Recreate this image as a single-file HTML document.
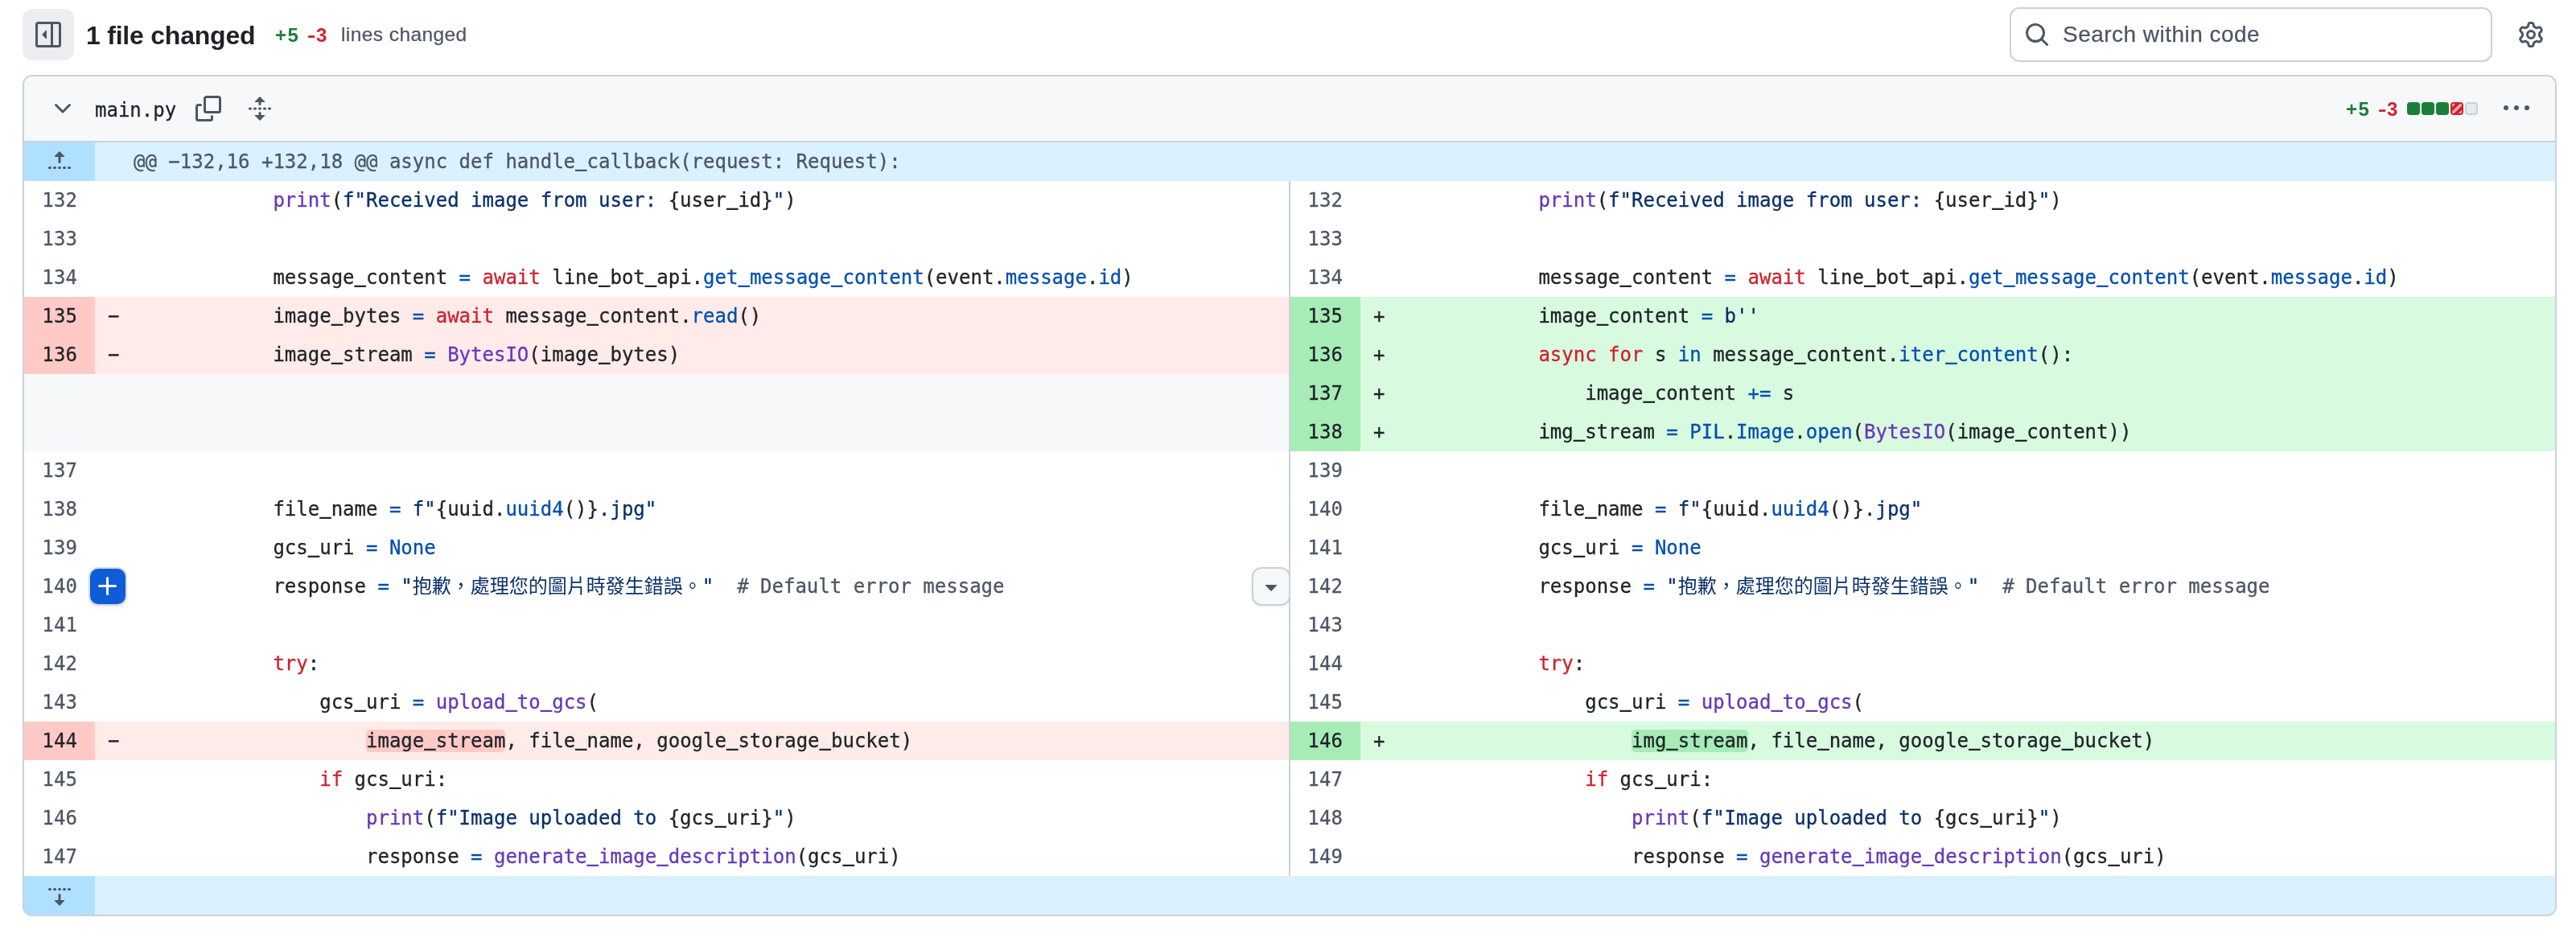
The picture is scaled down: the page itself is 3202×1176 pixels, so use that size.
<!DOCTYPE html>
<html lang="en">
<head>
<meta charset="utf-8">
<title>1 file changed</title>
<style>
*{box-sizing:border-box}
html,body{margin:0;padding:0}
html{background:#fff}
body{width:3202px;height:1176px;background:#fff;position:relative;overflow:hidden;color:#1f2328;font-family:"Liberation Sans",sans-serif;-webkit-font-smoothing:antialiased;will-change:transform}
svg{display:block}
.ic path,.ic circle{fill:#4d5664}

/* ---------- top toolbar ---------- */
.tgl{position:absolute;left:28px;top:11px;width:64px;height:64px;border-radius:12px;background:#ebedf0}
.tgl svg{position:absolute;left:16px;top:16px}
.ttl{position:absolute;left:107px;top:20px;height:48px;line-height:48px;font-size:32px;font-weight:700;white-space:nowrap;color:#1f2328;letter-spacing:-.22px}
.st{position:absolute;top:26px;height:36px;line-height:36px;font-size:24px;white-space:nowrap}
.st.add{left:342px;color:#1a7f37;font-weight:700;letter-spacing:1.6px}
.st.del{left:382px;color:#d1242f;font-weight:700;letter-spacing:3px}
.st.lc{left:424px;color:#4d5664;font-size:24.5px;letter-spacing:.42px;top:25px;-webkit-text-stroke:.25px}
.srch{position:absolute;left:2498px;top:9px;width:600px;height:68px;border:2px solid #c8d2dc;border-radius:12px;background:#fff}
.srch svg{position:absolute;left:16px;top:16px}
.srch span{position:absolute;left:64px;top:12px;height:40px;line-height:40px;font-size:28px;letter-spacing:.47px;-webkit-text-stroke:.25px;color:#4d5664;white-space:nowrap}
.gear{position:absolute;left:3130px;top:27px}

/* ---------- file box ---------- */
.file{position:absolute;left:28px;top:93px;width:3150px;height:1046px;border:2px solid #c8d2dc;border-radius:12px;overflow:hidden;background:#fff}
.fh{position:relative;height:82px;background:#f6f8fa;border-bottom:2px solid #c8d2dc}
.fh .chev{position:absolute;left:32px;top:24px}
.fh .name{-webkit-text-stroke:.3px;position:absolute;left:88px;top:22px;height:40px;line-height:40px;font-family:"DejaVu Sans Mono","Liberation Mono",monospace;font-size:24px;color:#1f2328;white-space:nowrap}
.fh .copy{position:absolute;left:213px;top:24px}
.fh .unf{position:absolute;left:277px;top:24px}
.fh .fadd{position:absolute;left:2886px;top:23px;letter-spacing:1.6px;height:36px;line-height:36px;font-size:24px;font-weight:700;color:#1a7f37}
.fh .fdel{position:absolute;left:2926px;top:23px;letter-spacing:3px;height:36px;line-height:36px;font-size:24px;font-weight:700;color:#d1242f}
.fh .blk{position:absolute;top:32px;width:16px;height:16px;border-radius:4px}
.fh .blk.g{background:#1a7f37}
.fh .blk.r{background:#cf222e;overflow:hidden}
.fh .blk.n{background:#e6eaee;border:2px solid #c8d1db}
.fh .keb{position:absolute;left:3082px;top:24px}

/* ---------- diff ---------- */
.diff{-webkit-text-stroke:.3px;font-family:"DejaVu Sans Mono","Noto Sans CJK TC","Liberation Mono",monospace;font-size:24px;line-height:48px}
.row{position:relative;height:48px;width:3146px}
.num,.code{position:absolute;top:0;height:48px;white-space:pre;overflow:hidden}
.num{text-align:right;color:#4d5664;padding-right:21.8px;letter-spacing:.2px}
.num.l{left:0;width:88px}
.num.r{left:1572px;width:89px;border-left:2px solid #c8d2dc}
.code.l{left:88px;width:1484px}
.code.r{left:1661px;width:1485px}
.code .mk{position:absolute;left:16px;top:0}
.code .ln{position:absolute;left:48px;top:0}
.num.d{background:#ffc9c6;color:#1f2328}
.code.d{background:#ffebe9}
.num.a{background:#a7ecb7;color:#1f2328}
.code.a{background:#d8fadf}
.num.e,.code.e{background:#f6f8fa}
.num.h{background:#afe0ff;width:88px}
.num.h svg{position:absolute;left:28px;top:8px}
.code.h{left:88px;width:3058px;background:#daf1ff;color:#4d5664}
.k{color:#cf222e}
.c{color:#0550ae}
.e{color:#6639ba}
.s{color:#0a3069}
.cj{-webkit-text-stroke:0}
.cm{color:#4d5664}
.code.d .x{background:#ffc9c6;border-radius:5px}
.code.a .x{background:#a7ecb7;border-radius:5px}

/* floating controls on row 140 */
.plus{position:absolute;left:82px;top:612px;width:44px;height:44px;border-radius:10px;background:#0e5dd7;box-shadow:0 0 0 2px #d6dbe0,0 3px 4px rgba(31,35,40,.10)}
.plus svg{position:absolute;left:6px;top:6px}
.plus path{fill:#fff}
.dd{position:absolute;left:1526px;top:610px;width:48px;height:48px;border:2px solid #c8d2dc;border-radius:12px;background:#f6f8fa;box-shadow:0 2px 3px rgba(31,35,40,.06)}
.dd svg{position:absolute;left:6px;top:6px}
u{text-decoration:none;position:relative;top:-3px;text-shadow:0 1px 0 currentColor}
.hy{display:inline-block;transform:scaleX(1.3);transform-origin:0 50%;font-weight:inherit}

</style>
</head>
<body>
<div class="tgl"><svg class="ic" viewBox="0 0 16 16" width="32" height="32"><path d="M4.18 7.82a.25.25 0 0 0 0 .36l2.4 2.39a.25.25 0 0 0 .42-.17V5.6a.25.25 0 0 0-.42-.17Z"/><path d="M1.75 0h12.5C15.216 0 16 .784 16 1.75v12.5A1.75 1.75 0 0 1 14.25 16H1.75A1.75 1.75 0 0 1 0 14.25V1.75C0 .784.784 0 1.75 0ZM1.5 1.75v12.5c0 .138.112.25.25.25H9.5v-13H1.75a.25.25 0 0 0-.25.25ZM11 14.5h3.25a.25.25 0 0 0 .25-.25V1.75a.25.25 0 0 0-.25-.25H11Z"/></svg></div>
<div class="ttl">1 file changed</div>
<div class="st add">+5</div>
<div class="st del"><b class="hy">-</b>3</div>
<div class="st lc">lines changed</div>
<div class="srch"><svg class="ic" viewBox="0 0 16 16" width="32" height="32"><path d="M10.68 11.74a6 6 0 0 1-7.922-8.982 6 6 0 0 1 8.982 7.922l3.04 3.04a.749.749 0 0 1-.326 1.275.749.749 0 0 1-.734-.215ZM11.5 7a4.499 4.499 0 1 0-8.997 0A4.499 4.499 0 0 0 11.5 7Z"/></svg><span>Search within code</span></div>
<svg class="ic gear" viewBox="0 0 16 16" width="32" height="32"><path d="M8 0a8.2 8.2 0 0 1 .701.031C9.444.095 9.99.645 10.16 1.29l.288 1.107c.018.066.079.158.212.224.231.114.454.243.668.386.123.082.233.09.299.071l1.103-.303c.644-.176 1.392.021 1.82.63.27.385.506.792.704 1.218.315.675.111 1.422-.364 1.891l-.814.806c-.049.048-.098.147-.088.294.016.257.016.515 0 .772-.01.147.038.246.088.294l.814.806c.475.469.679 1.216.364 1.891a7.977 7.977 0 0 1-.704 1.217c-.428.61-1.176.807-1.82.63l-1.102-.302c-.067-.019-.177-.011-.3.071a5.909 5.909 0 0 1-.668.386c-.133.066-.194.158-.211.224l-.29 1.106c-.168.646-.715 1.196-1.458 1.260a8.006 8.006 0 0 1-1.402 0c-.743-.064-1.289-.614-1.458-1.260l-.289-1.106c-.018-.066-.079-.158-.212-.224a5.738 5.738 0 0 1-.668-.386c-.123-.082-.233-.09-.299-.071l-1.103.303c-.644.176-1.392-.021-1.820-.63a8.120 8.120 0 0 1-.704-1.218c-.315-.675-.111-1.422.363-1.891l.815-.806c.050-.048.098-.147.088-.294a6.214 6.214 0 0 1 0-.772c.010-.147-.038-.246-.088-.294l-.815-.806C.635 6.045.431 5.298.746 4.623a7.920 7.920 0 0 1 .704-1.217c.428-.61 1.176-.807 1.820-.63l1.102.302c.067.019.177.011.300-.071.214-.143.437-.272.668-.386.133-.066.194-.158.211-.224l.290-1.106C6.009.645 6.556.095 7.299.030 7.530.010 7.764 0 8 0Zm-.571 1.525c-.036.003-.108.036-.137.146l-.289 1.105c-.147.561-.549.967-.998 1.189-.173.086-.340.183-.500.290-.417.278-.970.423-1.529.270l-1.103-.303c-.109-.030-.175.016-.195.045-.220.312-.412.644-.573.990-.014.031-.021.110.059.190l.815.806c.411.406.562.957.530 1.456a4.709 4.709 0 0 0 0 .582c.032.499-.119 1.050-.530 1.456l-.815.806c-.081.080-.073.159-.059.190.162.346.353.677.573.989.020.030.085.076.195.046l1.102-.303c.560-.153 1.113-.008 1.530.270.161.107.328.204.501.290.447.222.850.629.997 1.189l.289 1.105c.029.109.101.143.137.146a6.600 6.600 0 0 0 1.142 0c.036-.003.108-.036.137-.146l.289-1.105c.147-.561.549-.967.998-1.189.173-.086.340-.183.500-.290.417-.278.970-.423 1.529-.270l1.103.303c.109.029.175-.016.195-.045.220-.313.411-.644.573-.990.014-.031.021-.110-.059-.190l-.815-.806c-.411-.406-.562-.957-.530-1.456a4.709 4.709 0 0 0 0-.582c-.032-.499.119-1.050.530-1.456l.815-.806c.081-.080.073-.159.059-.190a6.464 6.464 0 0 0-.573-.989c-.020-.030-.085-.076-.195-.046l-1.102.303c-.560.153-1.113.008-1.530-.270a4.440 4.440 0 0 0-.501-.290c-.447-.222-.850-.629-.997-1.189l-.289-1.105c-.029-.110-.101-.143-.137-.146a6.600 6.600 0 0 0-1.142 0ZM11 8a3 3 0 1 1-6 0 3 3 0 0 1 6 0ZM9.500 8a1.500 1.500 0 1 0-3.001.001A1.500 1.500 0 0 0 9.500 8Z"/></svg>

<div class="file">
<div class="fh">
<svg class="ic chev" viewBox="0 0 16 16" width="32" height="32"><path d="M12.78 5.22a.749.749 0 0 1 0 1.060l-4.250 4.250a.749.749 0 0 1-1.060 0L3.220 6.280a.749.749 0 1 1 1.060-1.060L8 8.939l3.720-3.719a.749.749 0 0 1 1.060 0Z"/></svg>
<span class="name">main.py</span>
<svg class="ic copy" viewBox="0 0 16 16" width="32" height="32"><path d="M0 6.750C0 5.784.784 5 1.750 5h1.500a.75.75 0 0 1 0 1.500h-1.500a.25.25 0 0 0-.250.250v7.500c0 .138.112.250.250.250h7.500a.25.25 0 0 0 .250-.250v-1.500a.75.75 0 0 1 1.500 0v1.500A1.750 1.750 0 0 1 9.250 16h-7.500A1.750 1.750 0 0 1 0 14.250Z"/><path d="M5 1.750C5 .784 5.784 0 6.750 0h7.500C15.216 0 16 .784 16 1.750v7.500A1.750 1.750 0 0 1 14.250 11h-7.500A1.750 1.750 0 0 1 5 9.250Zm1.750-.250a.25.25 0 0 0-.250.250v7.500c0 .138.112.250.250.250h7.500a.25.25 0 0 0 .250-.250v-7.500a.25.25 0 0 0-.250-.250Z"/></svg>
<svg class="ic unf" viewBox="0 0 16 16" width="32" height="32"><path d="m8.177.677 2.896 2.896a.25.25 0 0 1-.177.427H8.750v1.250a.75.75 0 0 1-1.500 0V4H5.104a.25.25 0 0 1-.177-.427L7.823.677a.25.25 0 0 1 .354 0ZM7.250 10.750a.75.75 0 0 1 1.500 0V12h2.146a.25.25 0 0 1 .177.427l-2.896 2.896a.25.25 0 0 1-.354 0l-2.896-2.896A.25.25 0 0 1 5.104 12H7.250v-1.250Zm-5-2a.75.75 0 0 0 0-1.500h-.500a.75.75 0 0 0 0 1.500h.500ZM6 8a.75.75 0 0 1-.750.750h-.500a.75.75 0 0 1 0-1.500h.500A.75.75 0 0 1 6 8Zm2.250.750a.75.75 0 0 0 0-1.500h-.500a.75.75 0 0 0 0 1.500h.500ZM12 8a.75.75 0 0 1-.750.750h-.500a.75.75 0 0 1 0-1.500h.500A.75.75 0 0 1 12 8Zm2.250.750a.75.75 0 0 0 0-1.500h-.500a.75.75 0 0 0 0 1.500h.500Z"/></svg>
<span class="fadd">+5</span><span class="fdel"><b class="hy">-</b>3</span>
<i class="blk g" style="left:2962px"></i><i class="blk g" style="left:2980px"></i><i class="blk g" style="left:2998px"></i>
<i class="blk r" style="left:3016px"><svg viewBox="0 0 16 16" width="16" height="16"><clipPath id="rc"><rect x="2" y="2" width="12" height="12" rx="1.5"/></clipPath><g clip-path="url(#rc)" fill="#f0abb0"><path d="M2 2h4.200L2 6.200ZM2 14l0-2.500L11.500 2h2.500l0 2.500L4.500 14ZM14 14H9.800L14 9.800Z"/></g></svg></i>
<i class="blk n" style="left:3034px"></i>
<svg class="ic keb" viewBox="0 0 16 16" width="32" height="32"><path d="M8 9a1.500 1.500 0 1 0 0-3 1.500 1.500 0 0 0 0 3ZM1.500 9a1.500 1.500 0 1 0 0-3 1.500 1.500 0 0 0 0 3Zm13 0a1.500 1.500 0 1 0 0-3 1.500 1.500 0 0 0 0 3Z"/></svg>
</div>

<div class="diff">
<div class="row hunk"><div class="num l h"><svg class="ic" viewBox="0 0 16 16" width="32" height="32"><path d="M7.823 1.677 4.927 4.573A.25.25 0 0 0 5.104 5H7.25v3.236a.75.75 0 1 0 1.5 0V5h2.146a.25.25 0 0 0 .177-.427L8.177 1.677a.25.25 0 0 0-.354 0ZM13.75 11a.75.75 0 0 0 0 1.5h.5a.75.75 0 0 0 0-1.5h-.5Zm-3.75.75a.75.75 0 0 1 .75-.75h.5a.75.75 0 0 1 0 1.5h-.5a.75.75 0 0 1-.75-.75ZM7.75 11a.75.75 0 0 0 0 1.5h.5a.75.75 0 0 0 0-1.5h-.5ZM4 11.75a.75.75 0 0 1 .75-.75h.5a.75.75 0 0 1 0 1.5h-.5a.75.75 0 0 1-.75-.75ZM1.75 11a.75.75 0 0 0 0 1.5h.5a.75.75 0 0 0 0-1.5h-.5Z"/></svg></div><div class="code h"><span class="ln">@@ −132,16 +132,18 @@ async def handle<u>_</u>callback(request: Request):</span></div></div>
<div class="row"><div class="num l n">132</div><div class="code l n"><span class="ln">            <span class="e">print</span>(<span class="s">f"Received image from user: </span>{user<u>_</u>id}<span class="s">"</span>)</span></div><div class="num r n">132</div><div class="code r n"><span class="ln">            <span class="e">print</span>(<span class="s">f"Received image from user: </span>{user<u>_</u>id}<span class="s">"</span>)</span></div></div>
<div class="row"><div class="num l n">133</div><div class="code l n"><span class="ln"></span></div><div class="num r n">133</div><div class="code r n"><span class="ln"></span></div></div>
<div class="row"><div class="num l n">134</div><div class="code l n"><span class="ln">            message<u>_</u>content <span class="c">=</span> <span class="k">await</span> line<u>_</u>bot<u>_</u>api.<span class="c">get<u>_</u>message<u>_</u>content</span>(event.<span class="c">message</span>.<span class="c">id</span>)</span></div><div class="num r n">134</div><div class="code r n"><span class="ln">            message<u>_</u>content <span class="c">=</span> <span class="k">await</span> line<u>_</u>bot<u>_</u>api.<span class="c">get<u>_</u>message<u>_</u>content</span>(event.<span class="c">message</span>.<span class="c">id</span>)</span></div></div>
<div class="row"><div class="num l d">135</div><div class="code l d"><span class="mk">−</span><span class="ln">            image<u>_</u>bytes <span class="c">=</span> <span class="k">await</span> message<u>_</u>content.<span class="c">read</span>()</span></div><div class="num r a">135</div><div class="code r a"><span class="mk">+</span><span class="ln">            image<u>_</u>content <span class="c">=</span> <span class="s">b''</span></span></div></div>
<div class="row"><div class="num l d">136</div><div class="code l d"><span class="mk">−</span><span class="ln">            image<u>_</u>stream <span class="c">=</span> <span class="e">BytesIO</span>(image<u>_</u>bytes)</span></div><div class="num r a">136</div><div class="code r a"><span class="mk">+</span><span class="ln">            <span class="k">async</span> <span class="k">for</span> s <span class="c">in</span> message<u>_</u>content.<span class="c">iter<u>_</u>content</span>():</span></div></div>
<div class="row"><div class="num l e"></div><div class="code l e"><span class="ln"></span></div><div class="num r a">137</div><div class="code r a"><span class="mk">+</span><span class="ln">                image<u>_</u>content <span class="c">+=</span> s</span></div></div>
<div class="row"><div class="num l e"></div><div class="code l e"><span class="ln"></span></div><div class="num r a">138</div><div class="code r a"><span class="mk">+</span><span class="ln">            img<u>_</u>stream <span class="c">=</span> <span class="c">PIL</span>.<span class="c">Image</span>.<span class="c">open</span>(<span class="e">BytesIO</span>(image<u>_</u>content))</span></div></div>
<div class="row"><div class="num l n">137</div><div class="code l n"><span class="ln"></span></div><div class="num r n">139</div><div class="code r n"><span class="ln"></span></div></div>
<div class="row"><div class="num l n">138</div><div class="code l n"><span class="ln">            file<u>_</u>name <span class="c">=</span> <span class="s">f"</span>{uuid.<span class="c">uuid4</span>()}<span class="s">.jpg"</span></span></div><div class="num r n">140</div><div class="code r n"><span class="ln">            file<u>_</u>name <span class="c">=</span> <span class="s">f"</span>{uuid.<span class="c">uuid4</span>()}<span class="s">.jpg"</span></span></div></div>
<div class="row"><div class="num l n">139</div><div class="code l n"><span class="ln">            gcs<u>_</u>uri <span class="c">=</span> <span class="c">None</span></span></div><div class="num r n">141</div><div class="code r n"><span class="ln">            gcs<u>_</u>uri <span class="c">=</span> <span class="c">None</span></span></div></div>
<div class="row"><div class="num l n">140</div><div class="code l n"><span class="ln">            response <span class="c">=</span> <span class="s">"</span><span class="s cj">抱歉，處理您的圖片時發生錯誤。</span><span class="s">"</span>  <span class="cm"># Default error message</span></span></div><div class="num r n">142</div><div class="code r n"><span class="ln">            response <span class="c">=</span> <span class="s">"</span><span class="s cj">抱歉，處理您的圖片時發生錯誤。</span><span class="s">"</span>  <span class="cm"># Default error message</span></span></div></div>
<div class="row"><div class="num l n">141</div><div class="code l n"><span class="ln"></span></div><div class="num r n">143</div><div class="code r n"><span class="ln"></span></div></div>
<div class="row"><div class="num l n">142</div><div class="code l n"><span class="ln">            <span class="k">try</span>:</span></div><div class="num r n">144</div><div class="code r n"><span class="ln">            <span class="k">try</span>:</span></div></div>
<div class="row"><div class="num l n">143</div><div class="code l n"><span class="ln">                gcs<u>_</u>uri <span class="c">=</span> <span class="e">upload<u>_</u>to<u>_</u>gcs</span>(</span></div><div class="num r n">145</div><div class="code r n"><span class="ln">                gcs<u>_</u>uri <span class="c">=</span> <span class="e">upload<u>_</u>to<u>_</u>gcs</span>(</span></div></div>
<div class="row"><div class="num l d">144</div><div class="code l d"><span class="mk">−</span><span class="ln">                    <span class="x">image<u>_</u>stream</span>, file<u>_</u>name, google<u>_</u>storage<u>_</u>bucket)</span></div><div class="num r a">146</div><div class="code r a"><span class="mk">+</span><span class="ln">                    <span class="x">img<u>_</u>stream</span>, file<u>_</u>name, google<u>_</u>storage<u>_</u>bucket)</span></div></div>
<div class="row"><div class="num l n">145</div><div class="code l n"><span class="ln">                <span class="k">if</span> gcs<u>_</u>uri:</span></div><div class="num r n">147</div><div class="code r n"><span class="ln">                <span class="k">if</span> gcs<u>_</u>uri:</span></div></div>
<div class="row"><div class="num l n">146</div><div class="code l n"><span class="ln">                    <span class="e">print</span>(<span class="s">f"Image uploaded to </span>{gcs<u>_</u>uri}<span class="s">"</span>)</span></div><div class="num r n">148</div><div class="code r n"><span class="ln">                    <span class="e">print</span>(<span class="s">f"Image uploaded to </span>{gcs<u>_</u>uri}<span class="s">"</span>)</span></div></div>
<div class="row"><div class="num l n">147</div><div class="code l n"><span class="ln">                    response <span class="c">=</span> <span class="e">generate<u>_</u>image<u>_</u>description</span>(gcs<u>_</u>uri)</span></div><div class="num r n">149</div><div class="code r n"><span class="ln">                    response <span class="c">=</span> <span class="e">generate<u>_</u>image<u>_</u>description</span>(gcs<u>_</u>uri)</span></div></div>
<div class="row hunk foot"><div class="num l h"><svg class="ic" viewBox="0 0 16 16" width="32" height="32"><path d="m8.177 14.323 2.896-2.896a.25.25 0 0 0-.177-.427H8.75V7.764a.75.75 0 1 0-1.5 0V11H5.104a.25.25 0 0 0-.177.427l2.896 2.896a.25.25 0 0 0 .354 0ZM2.25 5a.75.75 0 0 0 0-1.5h-.5a.75.75 0 0 0 0 1.5h.5ZM6 4.250a.75.75 0 0 1-.75.75h-.5a.75.75 0 0 1 0-1.5h.5a.75.75 0 0 1 .75.75ZM8.250 5a.75.75 0 0 0 0-1.5h-.5a.75.75 0 0 0 0 1.5h.5ZM12 4.250a.75.75 0 0 1-.75.75h-.5a.75.75 0 0 1 0-1.5h.5a.75.75 0 0 1 .75.75Zm2.250.75a.75.75 0 0 0 0-1.500h-.5a.75.75 0 0 0 0 1.500h.5Z"/></svg></div><div class="code h"></div></div>
</div>
<div class="plus"><svg viewBox="0 0 16 16" width="32" height="32"><path d="M7.750 2a.75.75 0 0 1 .750.750V7h4.250a.75.75 0 0 1 0 1.500H8.500v4.250a.75.75 0 0 1-1.500 0V8.500H2.750a.75.75 0 0 1 0-1.500H7V2.750A.75.75 0 0 1 7.750 2Z"/></svg></div>
<div class="dd"><svg class="ic" viewBox="0 0 16 16" width="32" height="32"><path d="m4.427 7.427 3.396 3.396a.25.25 0 0 0 .354 0l3.396-3.396A.25.25 0 0 0 11.396 7H4.604a.25.25 0 0 0-.177.427Z"/></svg></div>

</div>
</body>
</html>
